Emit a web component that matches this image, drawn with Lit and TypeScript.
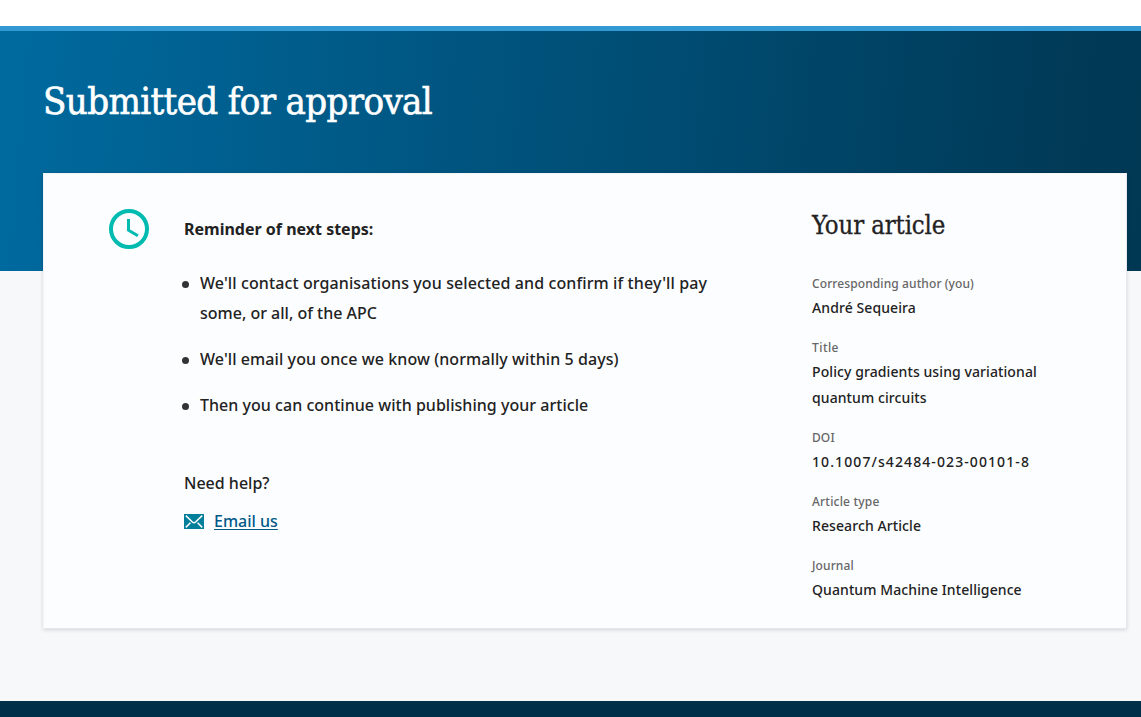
import { LitElement, html, css } from "lit";
import { customElement } from "lit/decorators.js";

@customElement("clock-icon")
class ClockIcon extends LitElement {
  static styles = css`
    :host { display: block; width: 40px; height: 40px; }
    svg { display: block; }
  `;
  render() {
    return html`<svg width="40" height="40" viewBox="0 0 40 40" fill="none" stroke="#01bab0">
      <circle cx="20" cy="20" r="18" stroke-width="4"></circle>
      <path d="M19.5 10v11.2l9.4 5.6" stroke-width="3"></path>
    </svg>`;
  }
}

@customElement("mail-icon")
class MailIcon extends LitElement {
  static styles = css`
    :host { display: block; width: 20px; height: 15px; }
    svg { display: block; }
  `;
  render() {
    return html`<svg width="20" height="15" viewBox="0 0 20 15" fill="none">
      <path d="M0 0h20v15H0z" fill="#007f9b"></path>
      <path d="M1.8 1.6l6.6 6.4q1.6 1.3 3.2 0l6.6-6.4M1.8 13.4l4.6-4.6M18.2 13.4l-4.6-4.6" stroke="#fcfdff" stroke-width="1.5"></path>
    </svg>`;
  }
}

@customElement("app-root")
class AppRoot extends LitElement {
  static styles = css`
    :host {
      display: flex;
      flex-direction: column;
      height: 717px;
      box-sizing: border-box;
      overflow: hidden;
      padding-top: 26px;
      background: #fff;
      color: #222;
      font-family: "Noto Sans", "Open Sans", sans-serif;
      font-size: 16px;
      font-weight: 500;
      line-height: 30px;
    }
    * { box-sizing: border-box; margin: 0; padding: 0; }
    span { white-space: nowrap; }
    .band {
      flex: none;
      height: 245px;
      border-top: 5px solid #3399d3;
      background: linear-gradient(95deg, #006a9f 0%, #005580 40%, #003a57 93%, #003854 100%);
      padding: 45px 43px 0;
    }
    h1, h2 {
      font-family: "DejaVu Serif Condensed", "DejaVu Serif", serif;
      font-stretch: condensed;
      font-weight: 400;
    }
    h1 {
      color: #fff;
      font-size: 38px;
      line-height: 50px;
      letter-spacing: -0.64px;
      -webkit-text-stroke: 0.6px #fff;
    }
    .body { flex: 1; background: #f7f8fa; padding: 0 14px 0 43px; }
    .card {
      display: grid;
      grid-template-columns: 75px 1fr 250px;
      height: 456px;
      margin-top: -98px;
      padding: 35px 64px 0 65px;
      background: #fcfdff;
      border: 1px solid #e6e7ea;
      border-top-color: #f3f4f6;
      border-left-color: #f3f4f6;
      box-shadow: 0 1px 4px rgba(0, 0, 0, 0.14);
    }
    .steps { padding-top: 5px; }
    .steps h3 { font-size: 16px; font-weight: 700; line-height: 30px; }
    ul { list-style: none; margin-top: 24px; }
    li { position: relative; padding-left: 16px; margin-bottom: 16px; }
    li::before {
      content: "";
      position: absolute;
      left: -2px;
      top: 13px;
      width: 7px;
      height: 7px;
      border-radius: 50%;
      background: #333;
    }
    .help { margin-top: 48px; }
    .mail { display: flex; align-items: center; gap: 10px; margin-top: 8px; }
    a { color: #005a88; text-decoration: underline; text-underline-offset: 2px; }
    h2 {
      font-size: 25.5px;
      line-height: 32px;
      margin-bottom: 32px;
      letter-spacing: -0.12px;
      -webkit-text-stroke: 0.3px #222;
    }
    dt { font-size: 12px; line-height: 22px; color: #666; letter-spacing: 0.1px; }
    dd { font-size: 14px; line-height: 26px; margin-bottom: 16px; letter-spacing: 0.09px; }
    .wide { letter-spacing: 0.105px; }
    .medium { letter-spacing: 0.08px; }
    .narrow { letter-spacing: 0.03px; }
    .title { letter-spacing: 0.45px; }
    .type { letter-spacing: 0.2px; }
    .doi { letter-spacing: 1.09px; }
    .footer { flex: none; height: 16px; background: #003049; }
  `;

  render() {
    return html`
      <header class="band"><h1><span>Submitted for approval</span></h1></header>
      <main class="body">
        <section class="card">
          <clock-icon></clock-icon>
          <div class="steps">
            <h3>Reminder of next steps:</h3>
            <ul>
              <li><span class="wide">We'll contact organisations you selected and confirm if they'll pay</span><br><span>some, or all, of the APC</span></li>
              <li><span class="medium">We'll email you once we know (normally within 5 days)</span></li>
              <li><span class="narrow">Then you can continue with publishing your article</span></li>
            </ul>
            <p class="help">Need help?</p>
            <p class="mail"><mail-icon></mail-icon><a href="#">Email us</a></p>
          </div>
          <aside>
            <h2>Your article</h2>
            <dl>
              <dt>Corresponding author (you)</dt>
              <dd>André Sequeira</dd>
              <dt><span class="title">Title</span></dt>
              <dd><span>Policy gradients using variational</span><br><span>quantum circuits</span></dd>
              <dt>DOI</dt>
              <dd><span class="doi">10.1007/s42484-023-00101-8</span></dd>
              <dt><span class="type">Article type</span></dt>
              <dd>Research Article</dd>
              <dt>Journal</dt>
              <dd>Quantum Machine Intelligence</dd>
            </dl>
          </aside>
        </section>
      </main>
      <footer class="footer"></footer>
    `;
  }
}
